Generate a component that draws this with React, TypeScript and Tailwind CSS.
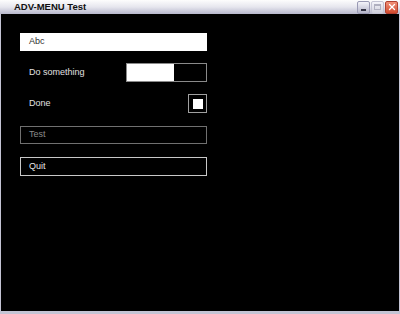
import { X } from "lucide-react";

const font = { fontFamily: '"Liberation Sans", Arial, sans-serif' };

function TitleBar() {
  return (
    <div className="flex h-[14px] items-center justify-between bg-gradient-to-b from-[#fdfdfd] via-[#e6e6ee] to-[#b8b8cc] pl-[14px] pr-[2px]">
      <span className="text-[9.5px] font-bold leading-none text-[#101010]">ADV-MENU Test</span>
      <div className="flex items-center gap-[1px]">
        <div className="flex h-[13px] w-[13px] items-end justify-center rounded-[2px] border border-[#9a9ab4] bg-gradient-to-b from-[#f4f4fa] to-[#b4b4c8] pb-[2px]">
          <div className="h-[2px] w-[5px] bg-[#333344]" />
        </div>
        <div className="flex h-[13px] w-[13px] items-center justify-center rounded-[2px] border border-[#c4c4d4] bg-gradient-to-b from-[#f4f4fa] to-[#d0d0dc]">
          <div className="h-[6px] w-[7px] border border-[#b0b0c0] border-t-2" />
        </div>
        <div className="flex h-[13px] w-[13px] items-center justify-center rounded-[2px] border border-[#b04030] bg-gradient-to-b from-[#f09078] to-[#d24a2c]">
          <X size={10} strokeWidth={3} className="text-white" />
        </div>
      </div>
    </div>
  );
}

export default function App() {
  return (
    <div className="flex h-[314px] w-[400px] flex-col bg-[#c4c4d4]" style={font}>
      <TitleBar />
      <div className="mx-[1px] mb-[3px] flex-1 bg-black">
        <div className="flex w-[206px] flex-col pl-[19px] pt-[19px] text-[9px]">
          <div className="flex h-[18px] items-center bg-white px-[9px] text-[#303030]">Abc</div>
          <div className="mt-[12px] flex h-[19px] items-center justify-between pl-[9px] text-[#e0e0e0]">
            <span>Do something</span>
            <div className="flex h-[19px] w-[81px] border border-[#8a8a8a]">
              <div className="w-[47px] bg-white" />
            </div>
          </div>
          <div className="mt-[12px] flex h-[19px] items-center justify-between pl-[9px] text-[#e0e0e0]">
            <span>Done</span>
            <div className="flex h-[19px] w-[19px] items-center justify-center border border-[#a0a0a0]">
              <div className="h-[10px] w-[10px] bg-white" />
            </div>
          </div>
          <div className="mt-[13px] flex h-[18px] items-center border border-[#707070] px-[8px] text-[#8a8a8a]">Test</div>
          <div className="mt-[13px] flex h-[19px] items-center border border-[#c8c8c8] px-[8px] text-[#e8e8e8]">Quit</div>
        </div>
      </div>
    </div>
  );
}
